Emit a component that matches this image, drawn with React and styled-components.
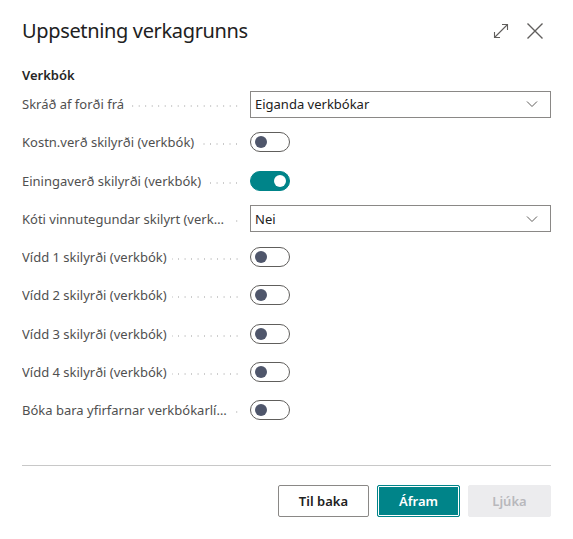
import React from "react";
import styled, { createGlobalStyle } from "styled-components";

const Global = createGlobalStyle`
  html, body { margin: 0; padding: 0; background: #fff; }
  body { font-family: "Segoe UI", "Noto Sans", "Open Sans", Arial, sans-serif; }
  * { box-sizing: border-box; }
`;

const Dialog = styled.div`
  width: 573px;
  height: 539px;
  background: #fff;
  display: flex;
  flex-direction: column;
  padding: 0 22px;
`;

const Header = styled.div`
  display: flex;
  align-items: center;
  justify-content: space-between;
  height: 60px;
  padding-top: 1px;
`;

const Title = styled.h1`
  margin: 0;
  font-size: 20px;
  font-weight: 400;
  color: #212121;
  letter-spacing: -0.35px;
`;

const HeaderIcons = styled.div`
  display: flex;
  align-items: center;
  gap: 14px;
  margin-right: 6px;
`;

const IconButton = styled.button`
  border: 0;
  background: none;
  padding: 0;
  width: 20px;
  height: 20px;
  display: flex;
  align-items: center;
  justify-content: center;
  color: #605e5c;
`;

const SectionHead = styled.div`
  font-size: 13px;
  font-weight: 600;
  color: #262626;
  margin-top: 5px;
  line-height: 20px;
`;

const Fields = styled.div`
  display: flex;
  flex-direction: column;
`;

const Row = styled.div`
  display: grid;
  grid-template-columns: 218px 10px 1fr;
  align-items: center;
  height: 38.25px;
`;

const Label = styled.div`
  display: flex;
  align-items: center;
  font-size: 13px;
  color: #505050;
  min-width: 0;
  white-space: nowrap;
`;

const LabelText = styled.span`
  overflow: hidden;
  text-overflow: ellipsis;
  flex: 0 1 auto;
  min-width: 0;
  padding-right: 5px;
`;

const Leader = styled.span`
  flex: 1 0 8px;
  height: 2px;
  margin-top: 4px;
  background-image: radial-gradient(circle, #c8c8c8 0.8px, transparent 1px);
  background-size: 6.5px 2px;
  background-position: right center;
  background-repeat: repeat-x;
`;

const Select = styled.div`
  grid-column: 3;
  height: 27px;
  border: 1px solid #8a8886;
  display: flex;
  align-items: center;
  justify-content: space-between;
  padding: 0 12px 0 4px;
  font-size: 13px;
  color: #212121;
`;

const Toggle = styled.div`
  grid-column: 3;
  width: 40px;
  height: 20px;
  border-radius: 10px;
  border: 1px solid ${p => (p.$on ? "#008489" : "#605e5c")};
  background: ${p => (p.$on ? "#008489" : "#fff")};
  position: relative;
  &::after {
    content: "";
    position: absolute;
    top: 3px;
    left: ${p => (p.$on ? "23px" : "4px")};
    width: 12px;
    height: 12px;
    border-radius: 50%;
    background: ${p => (p.$on ? "#fff" : "#4f566b")};
  }
`;

const Spacer = styled.div`
  flex: 1;
`;

const Divider = styled.div`
  height: 1px;
  background: #c8c8c8;
  margin-bottom: 19px;
`;

const Footer = styled.div`
  display: flex;
  justify-content: flex-end;
  gap: 8px;
  margin-bottom: 22px;
`;

const Btn = styled.button`
  height: 32px;
  min-width: 83px;
  padding: 0 20px;
  font-family: inherit;
  font-size: 13px;
  font-weight: 600;
  border-radius: 2px;
  cursor: pointer;
  ${p =>
    p.$variant === "primary"
      ? `background: #008489; color: #fff; border: 1px solid #008489; box-shadow: inset 0 0 0 1px #fff;`
      : p.$variant === "disabled"
      ? `background: #ececee; color: #b8b8bc; border: 1px solid #ececee;`
      : `background: #fff; color: #212121; border: 1px solid #8a8886;`}
`;

const Chevron = () => (
  <svg width="12" height="8" viewBox="0 0 12 8">
    <path d="M1 1.5 L6 6.5 L11 1.5" fill="none" stroke="#605e5c" strokeWidth="1" />
  </svg>
);

const ExpandIcon = () => (
  <svg width="18" height="18" viewBox="0 0 18 18">
    <path
      d="M2.5 15.5 L15.5 2.5 M10 2.5 H15.5 V8 M2.5 10 V15.5 H8"
      fill="none"
      stroke="#605e5c"
      strokeWidth="1.1"
    />
  </svg>
);

const CloseIcon = () => (
  <svg width="18" height="18" viewBox="0 0 18 18">
    <path d="M1.5 1.5 L16.5 16.5 M16.5 1.5 L1.5 16.5" fill="none" stroke="#605e5c" strokeWidth="1.4" />
  </svg>
);

const fields = [
  { label: "Skráð af forði frá", type: "select", value: "Eiganda verkbókar" },
  { label: "Kostn.verð skilyrði (verkbók)", type: "toggle", on: false },
  { label: "Einingaverð skilyrði (verkbók)", type: "toggle", on: true },
  { label: "Kóti vinnutegundar skilyrt (verkbók)", type: "select", value: "Nei" },
  { label: "Vídd 1 skilyrði (verkbók)", type: "toggle", on: false },
  { label: "Vídd 2 skilyrði (verkbók)", type: "toggle", on: false },
  { label: "Vídd 3 skilyrði (verkbók)", type: "toggle", on: false },
  { label: "Vídd 4 skilyrði (verkbók)", type: "toggle", on: false },
  { label: "Bóka bara yfirfarnar verkbókarlínur", type: "toggle", on: false },
];

export default function App() {
  return (
    <>
      <Global />
      <Dialog>
        <Header>
          <Title>Uppsetning verkagrunns</Title>
          <HeaderIcons>
            <IconButton aria-label="Expand"><ExpandIcon /></IconButton>
            <IconButton aria-label="Close"><CloseIcon /></IconButton>
          </HeaderIcons>
        </Header>
        <SectionHead>Verkbók</SectionHead>
        <Fields>
          {fields.map(f => (
            <Row key={f.label}>
              <Label title={f.label}>
                <LabelText>{f.label}</LabelText>
                <Leader />
              </Label>
              {f.type === "select" ? (
                <Select>
                  <span>{f.value}</span>
                  <Chevron />
                </Select>
              ) : (
                <Toggle $on={f.on} />
              )}
            </Row>
          ))}
        </Fields>
        <Spacer />
        <Divider />
        <Footer>
          <Btn>Til baka</Btn>
          <Btn $variant="primary">Áfram</Btn>
          <Btn $variant="disabled">Ljúka</Btn>
        </Footer>
      </Dialog>
    </>
  );
}
